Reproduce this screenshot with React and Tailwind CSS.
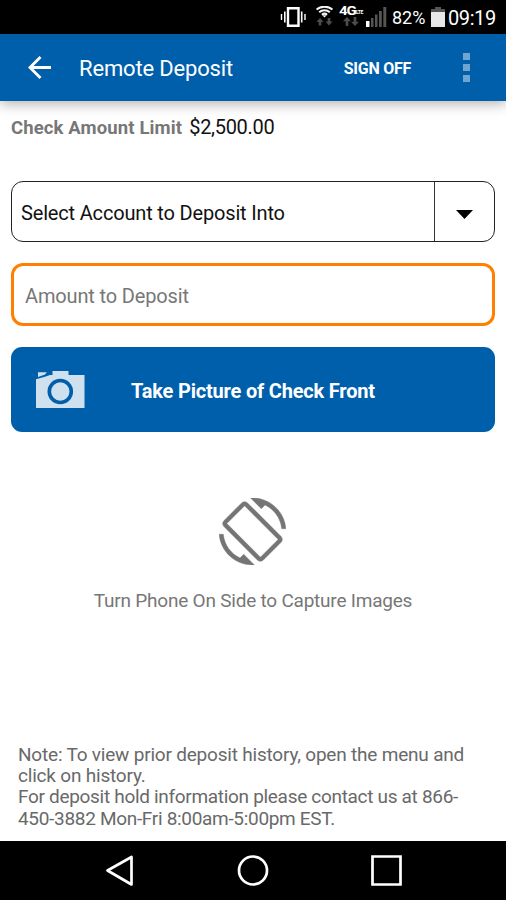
const VibrateIcon = () => (
  <svg className="h-[20px] w-[26px]" viewBox="0 0 26 20" fill="none" stroke="#fff">
    <path d="M8 1.200h10.500v17.600H8z" strokeWidth="2.400" />
    <path d="M4.800 4.500v11M21.700 4.500v11" strokeWidth="1.600" />
    <path d="M1.500 7v6M25 7v6" strokeWidth="1.400" />
  </svg>
);

const WifiIcon = () => (
  <svg className="h-[20px] w-[17px]" viewBox="0 0 17 20">
    <g fill="none" stroke="#f4f4f4" strokeWidth="2">
      <path d="M.6 3.600a12 12 0 0 1 15.800 0" />
      <path d="M3.200 6.300a7.600 7.600 0 0 1 10.600 0" />
      <path d="M5.900 8.700a4 4 0 0 1 5.200 0" />
    </g>
    <path d="M8.500 11.600 6.300 9.200h4.400z" fill="#f4f4f4" />
    <path
      d="M4 12l3.500 4H5.300v3.500H2.700V16H.5zM13 19.500l3.500-4h-2.200V12h-2.600v3.500H9.500z"
      fill="#4d4d4d"
    />
  </svg>
);

const DataArrows = () => (
  <svg className="h-[9px] w-[16px]" viewBox="0 0 16 9">
    <path
      d="M4 0l4 4.200H5.300V9H2.700V4.200H0zM12 9l4-4.200h-2.700V0h-2.600v4.800H8z"
      fill="#4d4d4d"
    />
  </svg>
);

const SignalIcon = () => (
  <svg className="h-[20px] w-[21px]" viewBox="0 0 21 20">
    <path d="M0 14h3.500v6H0z" fill="#fff" />
    <path d="M5 11h2.500v9H5zM9 7.500h2.500V20H9zM13 4h2.800v16H13zM17.300 0h3v20h-3z" fill="#555" />
  </svg>
);

const BatteryIcon = () => (
  <svg className="h-[20px] w-[14px]" viewBox="0 0 14 20">
    <path d="M4 0h6v2h4v3H0V2h4z" fill="#555" />
    <path d="M0 5h14v15H0z" fill="#e8e8e8" />
  </svg>
);

const BackArrow = () => (
  <svg className="h-[23px] w-[23px]" viewBox="0 0 23 23" fill="none" stroke="#fff" strokeWidth="2.800">
    <path d="M12.500 1 2 11.500 12.500 22M2 11.500h21" />
  </svg>
);

const CameraIcon = () => (
  <svg className="h-[38px] w-[49px]" viewBox="0 0 49 38">
    <path
      d="M16.500 0H32.500v4H48.500v33H0V8.200l9-2.500 5-1.700h2.500zM2 1.200h8.800L9 3.500 2 6z"
      fill="#cfe0ee"
    />
    <circle cx="24.300" cy="20.500" r="11" fill="none" stroke="#005fab" strokeWidth="3.600" />
  </svg>
);

const RotateIcon = () => (
  <svg className="size-[67px]" viewBox="0 0 24 24" fill="#757575" stroke="#757575" strokeWidth="0.150">
    <path d="M16.480 2.520c3.270 1.550 5.610 4.720 5.970 8.480h1.500C23.440 4.840 18.290 0 12 0l-.66.03 3.810 3.810 1.330-1.320zm-6.250-.77c-.59-.59-1.540-.59-2.120 0L1.750 8.110c-.59.59-.59 1.540 0 2.120l12.020 12.020c.59.59 1.540.59 2.120 0l6.360-6.360c.59-.59.59-1.540 0-2.120L10.230 1.750zm4.600 19.440L2.810 9.170l6.360-6.360 12.020 12.020-6.360 6.360zm-7.310.29C4.250 19.940 1.910 16.760 1.550 13H.05C.56 19.160 5.710 24 12 24l.66-.03-3.810-3.810-1.330 1.320z" />
  </svg>
);

const StatusBar = () => (
  <div className="flex h-[34px] items-start bg-black pl-[280px] pt-[7px] text-white">
    <VibrateIcon />
    <div className="ml-[10px] -mt-px">
      <WifiIcon />
    </div>
    <div className="ml-[6px] flex w-[25px] flex-col">
      <div className="flex h-[10px] items-start font-bold">
        <span className="w-[17px] origin-left scale-x-125 text-[12px] leading-[9px] tracking-[-0.800px]">
          4G
        </span>
        <span className="origin-left scale-y-125 text-[5px] leading-[8px] tracking-[-0.400px]">LTE</span>
      </div>
      <div className="ml-[4px]">
        <DataArrows />
      </div>
    </div>
    <div className="ml-[2px]">
      <SignalIcon />
    </div>
    <span className="ml-[5px] w-[34px] whitespace-nowrap text-[18px] leading-[22px]">82%</span>
    <div className="ml-[5px]">
      <BatteryIcon />
    </div>
    <span className="ml-[3px] whitespace-nowrap text-[20px] leading-[22px] tracking-[-0.400px]">09:19</span>
  </div>
);

const AppBar = () => (
  <header className="flex h-[67px] items-center bg-[#005fab] pl-[28px] pr-[36px] text-white shadow-[0_3px_12px_rgba(0,0,0,0.3)]">
    <BackArrow />
    <h1 className="ml-[28px] pt-0.5 text-[22px] leading-7 tracking-[-0.170px]">Remote Deposit</h1>
    <button className="ml-auto pt-0.5 text-[16px] font-bold tracking-[-0.250px]">SIGN OFF</button>
    <div className="ml-[52px] flex flex-col gap-1">
      <span className="size-[7px] bg-[#70a5d0]" />
      <span className="size-[7px] bg-[#70a5d0]" />
      <span className="size-[7px] bg-[#70a5d0]" />
    </div>
  </header>
);

const NavBar = () => (
  <nav className="flex h-[59px] items-center bg-black pl-[105px]">
    <svg className="h-[32px] w-[300px]" viewBox="0 0 300 32" fill="none" stroke="#fff" strokeWidth="2.700">
      <path d="M2.500 15.500 26.500 2v27.500z" strokeLinejoin="round" />
      <circle cx="148" cy="15.500" r="14" />
      <path d="M267.500 1.500h28v28h-28z" />
    </svg>
  </nav>
);

export default function App() {
  return (
    <div className="flex h-[900px] w-[506px] flex-col overflow-hidden bg-white font-['Roboto',sans-serif]">
      <StatusBar />
      <AppBar />

      <main className="flex flex-1 flex-col px-[11px]">
        <div className="flex h-[38px] items-baseline gap-[7px] pt-[14px] leading-6">
          <span className="text-[18.500px] font-bold tracking-[0.130px] text-[#777]">Check Amount Limit</span>
          <span className="text-[20px] tracking-[-0.300px] text-[#111]">$2,500.00</span>
        </div>

        {/* Account picker */}
        <div className="mt-[42px] flex h-[61px] w-[484px] shrink-0 rounded-[12px] border border-[#222]">
          <div className="flex flex-1 items-center pl-[9px] pt-[2px] text-[20px] tracking-[-0.170px] text-[#111]">
            Select Account to Deposit Into
          </div>
          <div className="flex w-[60px] items-center justify-center border-l border-[#333]">
            <svg className="mt-[6px] h-[9px] w-[17px]" viewBox="0 0 17 9">
              <path d="M0 0h17L8.500 9z" />
            </svg>
          </div>
        </div>

        <input
          className="mt-[21px] h-[63px] w-[484px] shrink-0 rounded-[12px] border-[3px] border-[#ff8000] px-[11px] pt-[2px] text-[20px] tracking-[-0.150px] text-[#777] outline-none placeholder:text-[#777]"
          placeholder="Amount to Deposit"
        />

        <button className="mt-[21px] flex h-[85px] w-[484px] shrink-0 items-center rounded-[11px] bg-[#005fab] pl-[25px] text-white">
          <CameraIcon />
          <span className="ml-[46px] pt-[2px] text-[20px] font-bold tracking-[-0.190px]">
            Take Picture of Check Front
          </span>
        </button>

        <div className="mt-[66px] flex flex-col items-center">
          <div className="pr-px">
            <RotateIcon />
          </div>
          <p className="mt-[24px] text-[19px] leading-6 tracking-[-0.220px] text-[#777]">
            Turn Phone On Side to Capture Images
          </p>
        </div>

        <div className="mb-[12px] mt-auto whitespace-nowrap pl-[7px] text-[19px] leading-[21.300px] text-[#696969]">
          <p className="tracking-[-0.200px]">
            Note: To view prior deposit history, open the menu and
            <br />
            click on history.
          </p>
          <p className="tracking-[-0.310px]">
            For deposit hold information please contact us at 866-
            <br />
            450-3882 Mon-Fri 8:00am-5:00pm EST.
          </p>
        </div>
      </main>

      <NavBar />
    </div>
  );
}
